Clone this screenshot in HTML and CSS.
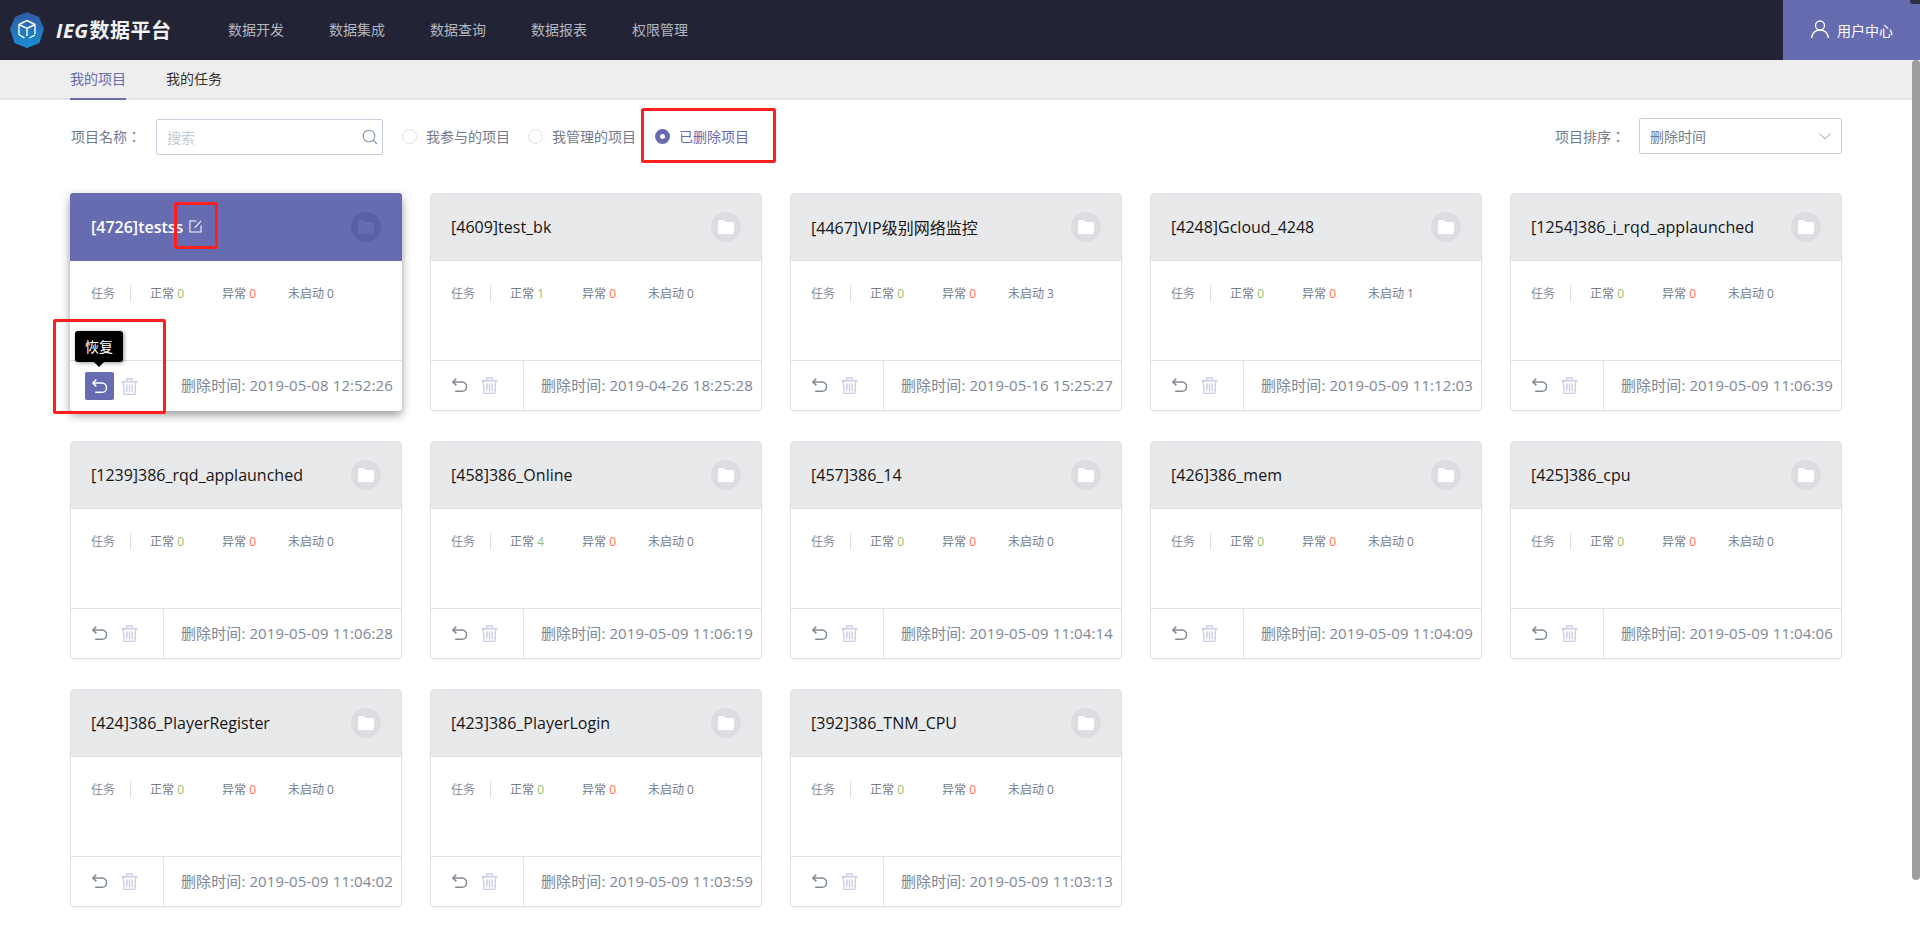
FILE: index.html
```html
<!DOCTYPE html>
<html lang="zh-CN">
<head>
    <meta charset="UTF-8">
    <title>IEG数据平台</title>
    <link rel="stylesheet" href="styles.css">
</head>
<body>
    <svg class="sprite" width="0" height="0">
        <defs>
            <linearGradient id="logo-fill" x1="0" y1="0" x2="0" y2="1">
                <stop offset="0" stop-color="#2f5aa6"/>
                <stop offset="1" stop-color="#1a8fd1"/>
            </linearGradient>
        </defs>
        <symbol id="i-undo" viewBox="0 0 16 16">
            <path d="M5 1.5 1.8 4.7 5 7.9M1.8 4.7h8.4a4.4 4.4 0 0 1 0 8.8H4" fill="none" stroke="currentColor" stroke-width="1.4"/>
        </symbol>
        <symbol id="i-trash" viewBox="0 0 16 16">
            <path d="M.5 3.5h15M5.5 3.300V1h5v2.300M2.200 3.500l.8 12h10l.8-12M5.500 6v7.500M8 6v7.500M10.500 6v7.500" fill="none" stroke="currentColor" stroke-width="1.300"/>
        </symbol>
        <symbol id="i-folder" viewBox="0 0 16 14">
            <path d="M0 1.500A1.500 1.500 0 0 1 1.500 0h4.300l1.700 2h7A1.500 1.500 0 0 1 16 3.500v9a1.500 1.500 0 0 1-1.500 1.500h-13A1.500 1.500 0 0 1 0 12.500z" fill="currentColor"/>
        </symbol>
    </svg>

    <header class="topbar">
        <a class="logo">
            <svg class="logo-mark" viewBox="0 0 34 36">
                <path d="M17 0 29 5 34 17 29.500 31 17 36 4.500 31 0 17 5 5z" fill="url(#logo-fill)"/>
                <path d="M17 8.500 25 12.500V22M17 8.500 9 12.500V22.500L14.500 26M9 12.500 17 16.500 25 12.500M17 16.500V24M19.500 26 25 23" fill="none" stroke="#fff" stroke-width="1.400"/>
            </svg>
            <span class="logo-text"><i>IEG</i>数据平台</span>
        </a>
        <nav class="main-nav">
            <a>数据开发</a>
            <a>数据集成</a>
            <a>数据查询</a>
            <a>数据报表</a>
            <a>权限管理</a>
        </nav>
        <a class="user-center">
            <svg class="user-icon" viewBox="0 0 18 18">
                <circle cx="9" cy="5.500" r="4.500" fill="none" stroke="#fff" stroke-width="1.300"/>
                <path d="M.8 18c0-4.500 3.200-8 8.200-8s8.200 3.500 8.200 8" fill="none" stroke="#fff" stroke-width="1.300"/>
            </svg>
            用户中心
        </a>
    </header>

    <div class="subnav">
        <a class="tab active">我的项目</a>
        <a class="tab">我的任务</a>
    </div>

    <main class="content">
        <section class="filters">
            <span class="filter-label" lang="zh-TW">项目名称：</span>
            <div class="search">
                <span>搜索</span>
                <svg class="search-icon" viewBox="0 0 16 16">
                    <circle cx="7" cy="7" r="5.800" fill="none" stroke="currentColor" stroke-width="1.100"/>
                    <path d="m11.200 11.200 3.800 3.800" stroke="currentColor" stroke-width="1.100"/>
                </svg>
            </div>
            <label class="radio"><i></i>我参与的项目</label>
            <label class="radio"><i></i>我管理的项目</label>
            <label class="radio checked"><i></i>已删除项目</label>
            <span class="filter-label sort-label" lang="zh-TW">项目排序：</span>
            <div class="select">
                <span>删除时间</span>
                <svg class="chevron" viewBox="0 0 12 7">
                    <path d="m.5.500 5.500 5.500 5.500-5.500" fill="none" stroke="currentColor"/>
                </svg>
            </div>
        </section>

        <section class="card-grid">
            <article class="card current">
                <div class="card-head">
                    <h3>[4726]testss</h3>
                    <svg class="edit-icon" viewBox="0 0 14 14">
                        <path d="M8 1H1v12h12V6M6 8.500 13 1" fill="none" stroke="#fff" stroke-width="1.100"/>
                    </svg>
                    <span class="folder"><svg viewBox="0 0 16 14"><use href="#i-folder"/></svg></span>
                </div>
                <div class="stats">
                    <span class="stat-title">任务</span>
                    <span class="stat">正常 <b class="ok">0</b></span>
                    <span class="stat stat-err">异常 <b class="err">0</b></span>
                    <span class="stat">未启动 0</span>
                </div>
                <div class="card-foot">
                    <div class="actions">
                        <button class="act on"><svg viewBox="0 0 16 16"><use href="#i-undo"/></svg></button>
                        <button class="act trash"><svg viewBox="0 0 16 16"><use href="#i-trash"/></svg></button>
                        <span class="tooltip">恢复</span>
                    </div>
                    <span class="del-time">删除时间: 2019-05-08 12:52:26</span>
                </div>
            </article>

            <article class="card">
                <div class="card-head"><h3>[4609]test_bk</h3><span class="folder"><svg viewBox="0 0 16 14"><use href="#i-folder"/></svg></span></div>
                <div class="stats"><span class="stat-title">任务</span><span class="stat">正常 <b class="ok">1</b></span><span class="stat stat-err">异常 <b class="err">0</b></span><span class="stat">未启动 0</span></div>
                <div class="card-foot"><div class="actions"><button class="act"><svg viewBox="0 0 16 16"><use href="#i-undo"/></svg></button><button class="act trash"><svg viewBox="0 0 16 16"><use href="#i-trash"/></svg></button></div><span class="del-time">删除时间: 2019-04-26 18:25:28</span></div>
            </article>

            <article class="card">
                <div class="card-head"><h3>[4467]VIP级别网络监控</h3><span class="folder"><svg viewBox="0 0 16 14"><use href="#i-folder"/></svg></span></div>
                <div class="stats"><span class="stat-title">任务</span><span class="stat">正常 <b class="ok">0</b></span><span class="stat stat-err">异常 <b class="err">0</b></span><span class="stat">未启动 3</span></div>
                <div class="card-foot"><div class="actions"><button class="act"><svg viewBox="0 0 16 16"><use href="#i-undo"/></svg></button><button class="act trash"><svg viewBox="0 0 16 16"><use href="#i-trash"/></svg></button></div><span class="del-time">删除时间: 2019-05-16 15:25:27</span></div>
            </article>

            <article class="card">
                <div class="card-head"><h3>[4248]Gcloud_4248</h3><span class="folder"><svg viewBox="0 0 16 14"><use href="#i-folder"/></svg></span></div>
                <div class="stats"><span class="stat-title">任务</span><span class="stat">正常 <b class="ok">0</b></span><span class="stat stat-err">异常 <b class="err">0</b></span><span class="stat">未启动 1</span></div>
                <div class="card-foot"><div class="actions"><button class="act"><svg viewBox="0 0 16 16"><use href="#i-undo"/></svg></button><button class="act trash"><svg viewBox="0 0 16 16"><use href="#i-trash"/></svg></button></div><span class="del-time">删除时间: 2019-05-09 11:12:03</span></div>
            </article>

            <article class="card">
                <div class="card-head"><h3>[1254]386_i_rqd_applaunched</h3><span class="folder"><svg viewBox="0 0 16 14"><use href="#i-folder"/></svg></span></div>
                <div class="stats"><span class="stat-title">任务</span><span class="stat">正常 <b class="ok">0</b></span><span class="stat stat-err">异常 <b class="err">0</b></span><span class="stat">未启动 0</span></div>
                <div class="card-foot"><div class="actions"><button class="act"><svg viewBox="0 0 16 16"><use href="#i-undo"/></svg></button><button class="act trash"><svg viewBox="0 0 16 16"><use href="#i-trash"/></svg></button></div><span class="del-time">删除时间: 2019-05-09 11:06:39</span></div>
            </article>

            <article class="card">
                <div class="card-head"><h3>[1239]386_rqd_applaunched</h3><span class="folder"><svg viewBox="0 0 16 14"><use href="#i-folder"/></svg></span></div>
                <div class="stats"><span class="stat-title">任务</span><span class="stat">正常 <b class="ok">0</b></span><span class="stat stat-err">异常 <b class="err">0</b></span><span class="stat">未启动 0</span></div>
                <div class="card-foot"><div class="actions"><button class="act"><svg viewBox="0 0 16 16"><use href="#i-undo"/></svg></button><button class="act trash"><svg viewBox="0 0 16 16"><use href="#i-trash"/></svg></button></div><span class="del-time">删除时间: 2019-05-09 11:06:28</span></div>
            </article>

            <article class="card">
                <div class="card-head"><h3>[458]386_Online</h3><span class="folder"><svg viewBox="0 0 16 14"><use href="#i-folder"/></svg></span></div>
                <div class="stats"><span class="stat-title">任务</span><span class="stat">正常 <b class="ok">4</b></span><span class="stat stat-err">异常 <b class="err">0</b></span><span class="stat">未启动 0</span></div>
                <div class="card-foot"><div class="actions"><button class="act"><svg viewBox="0 0 16 16"><use href="#i-undo"/></svg></button><button class="act trash"><svg viewBox="0 0 16 16"><use href="#i-trash"/></svg></button></div><span class="del-time">删除时间: 2019-05-09 11:06:19</span></div>
            </article>

            <article class="card">
                <div class="card-head"><h3>[457]386_14</h3><span class="folder"><svg viewBox="0 0 16 14"><use href="#i-folder"/></svg></span></div>
                <div class="stats"><span class="stat-title">任务</span><span class="stat">正常 <b class="ok">0</b></span><span class="stat stat-err">异常 <b class="err">0</b></span><span class="stat">未启动 0</span></div>
                <div class="card-foot"><div class="actions"><button class="act"><svg viewBox="0 0 16 16"><use href="#i-undo"/></svg></button><button class="act trash"><svg viewBox="0 0 16 16"><use href="#i-trash"/></svg></button></div><span class="del-time">删除时间: 2019-05-09 11:04:14</span></div>
            </article>

            <article class="card">
                <div class="card-head"><h3>[426]386_mem</h3><span class="folder"><svg viewBox="0 0 16 14"><use href="#i-folder"/></svg></span></div>
                <div class="stats"><span class="stat-title">任务</span><span class="stat">正常 <b class="ok">0</b></span><span class="stat stat-err">异常 <b class="err">0</b></span><span class="stat">未启动 0</span></div>
                <div class="card-foot"><div class="actions"><button class="act"><svg viewBox="0 0 16 16"><use href="#i-undo"/></svg></button><button class="act trash"><svg viewBox="0 0 16 16"><use href="#i-trash"/></svg></button></div><span class="del-time">删除时间: 2019-05-09 11:04:09</span></div>
            </article>

            <article class="card">
                <div class="card-head"><h3>[425]386_cpu</h3><span class="folder"><svg viewBox="0 0 16 14"><use href="#i-folder"/></svg></span></div>
                <div class="stats"><span class="stat-title">任务</span><span class="stat">正常 <b class="ok">0</b></span><span class="stat stat-err">异常 <b class="err">0</b></span><span class="stat">未启动 0</span></div>
                <div class="card-foot"><div class="actions"><button class="act"><svg viewBox="0 0 16 16"><use href="#i-undo"/></svg></button><button class="act trash"><svg viewBox="0 0 16 16"><use href="#i-trash"/></svg></button></div><span class="del-time">删除时间: 2019-05-09 11:04:06</span></div>
            </article>

            <article class="card">
                <div class="card-head"><h3>[424]386_PlayerRegister</h3><span class="folder"><svg viewBox="0 0 16 14"><use href="#i-folder"/></svg></span></div>
                <div class="stats"><span class="stat-title">任务</span><span class="stat">正常 <b class="ok">0</b></span><span class="stat stat-err">异常 <b class="err">0</b></span><span class="stat">未启动 0</span></div>
                <div class="card-foot"><div class="actions"><button class="act"><svg viewBox="0 0 16 16"><use href="#i-undo"/></svg></button><button class="act trash"><svg viewBox="0 0 16 16"><use href="#i-trash"/></svg></button></div><span class="del-time">删除时间: 2019-05-09 11:04:02</span></div>
            </article>

            <article class="card">
                <div class="card-head"><h3>[423]386_PlayerLogin</h3><span class="folder"><svg viewBox="0 0 16 14"><use href="#i-folder"/></svg></span></div>
                <div class="stats"><span class="stat-title">任务</span><span class="stat">正常 <b class="ok">0</b></span><span class="stat stat-err">异常 <b class="err">0</b></span><span class="stat">未启动 0</span></div>
                <div class="card-foot"><div class="actions"><button class="act"><svg viewBox="0 0 16 16"><use href="#i-undo"/></svg></button><button class="act trash"><svg viewBox="0 0 16 16"><use href="#i-trash"/></svg></button></div><span class="del-time">删除时间: 2019-05-09 11:03:59</span></div>
            </article>

            <article class="card">
                <div class="card-head"><h3>[392]386_TNM_CPU</h3><span class="folder"><svg viewBox="0 0 16 14"><use href="#i-folder"/></svg></span></div>
                <div class="stats"><span class="stat-title">任务</span><span class="stat">正常 <b class="ok">0</b></span><span class="stat stat-err">异常 <b class="err">0</b></span><span class="stat">未启动 0</span></div>
                <div class="card-foot"><div class="actions"><button class="act"><svg viewBox="0 0 16 16"><use href="#i-undo"/></svg></button><button class="act trash"><svg viewBox="0 0 16 16"><use href="#i-trash"/></svg></button></div><span class="del-time">删除时间: 2019-05-09 11:03:13</span></div>
            </article>
        </section>
    </main>

    <!-- red boxes drawn on top of the screenshot -->
    <div class="mark mark-radio"></div>
    <div class="mark mark-edit"></div>
    <div class="mark mark-restore"></div>

    <div class="scroll-thumb"></div>
    <div class="scroll-top"></div>
</body>
</html>
```

FILE: styles.css
```css
* {
    box-sizing: border-box;
}

html, body {
    height: 100%;
    overflow: hidden;
}

body {
    margin: 0;
    background: #fff;
    font-family: "Open Sans", "Noto Sans CJK SC", sans-serif;
    font-size: 14px;
    color: #737c8b;
    position: relative;
}

.sprite {
    position: absolute;
}

/* top bar */
.topbar {
    height: 60px;
    background: #222436;
    display: flex;
    align-items: center;
}

.logo {
    display: flex;
    align-items: center;
    margin-left: 10px;
    width: 217px;
}

.logo-mark {
    width: 34px;
    height: 36px;
    flex: none;
}

.logo-text {
    margin: -2px 0 0 12px;
    font-family: "Noto Sans CJK SC", sans-serif;
    font-size: 20px;
    font-weight: 700;
    letter-spacing: 0.5px;
    color: #f2f3f5;
    white-space: nowrap;
}

.logo-text i {
    font-family: "Open Sans", sans-serif;
    margin-right: 1px;
}

.main-nav {
    display: flex;
    gap: 45px;
    flex: 1;
    margin: -2px 0 0 1px;
}

.main-nav a {
    color: #b4b6bf;
}

.user-center {
    width: 137px;
    height: 60px;
    background: #676bb0;
    color: #fff;
    display: flex;
    align-items: center;
    padding-left: 28px;
    gap: 8px;
}

.user-icon {
    width: 18px;
    height: 18px;
    margin-top: -2px;
}

/* sub nav */
.subnav {
    height: 40px;
    background: #eeeeee;
    border-bottom: 2px solid #e2e6ec;
    padding-left: 70px;
    display: flex;
    gap: 40px;
}

.tab {
    height: 40px;
    line-height: 37px;
    color: #333;
}

.tab.active {
    color: #676bb0;
    border-bottom: 2px solid #676bb0;
}

/* filter row */
.content {
    padding: 18px 78px 0 70px;
}

.filters {
    display: flex;
    align-items: center;
    height: 36px;
}

.filter-label {
    width: 86px;
    padding-left: 1px;
    font-family: "Open Sans", "Noto Sans CJK TC", sans-serif;
    white-space: nowrap;
    color: #737c8b;
}

.search {
    width: 227px;
    height: 36px;
    border: 1px solid #c6cfdb;
    border-radius: 2px;
    padding: 0 10px;
    margin: 2px 19px 0 0;
    display: flex;
    align-items: center;
    justify-content: space-between;
    color: #c3cad4;
}

.search-icon {
    width: 16px;
    height: 16px;
    color: #8a929e;
    margin-right: -6px;
}

.radio {
    display: flex;
    align-items: center;
    margin-right: 18px;
}

.radio i {
    width: 15px;
    height: 15px;
    border: 1px solid #dde1e7;
    border-radius: 50%;
    margin-right: 9px;
}

.radio.checked {
    color: #676bb0;
    margin-left: 1px;
}

.radio.checked i {
    border: 5px solid #676bb0;
    background: #fff;
}

.sort-label {
    margin-left: auto;
    width: 85px;
}

.select {
    width: 203px;
    height: 36px;
    border: 1px solid #c6cfdb;
    border-radius: 2px;
    padding: 0 10px;
    display: flex;
    align-items: center;
    justify-content: space-between;
}

.chevron {
    width: 12px;
    height: 7px;
    color: #9aa2ae;
}

/* cards */
.card-grid {
    display: grid;
    grid-template-columns: repeat(5, 332px);
    grid-auto-rows: 218px;
    gap: 30px 28px;
    margin-top: 39px;
}

.card {
    border: 1px solid #dfe1e6;
    border-radius: 4px;
    box-shadow: 0 1px 2px rgba(0, 0, 0, 0.06);
    background: #fff;
    display: flex;
    flex-direction: column;
}

.card-head {
    height: 67px;
    flex: none;
    background: #e8e9eb;
    border-bottom: 1px solid #dfe1e6;
    border-radius: 3px 3px 0 0;
    display: flex;
    align-items: center;
    padding: 0 20px;
}

.card-head h3 {
    margin: 0 0 1px;
    font-size: 16px;
    font-weight: 400;
    color: #151515;
}

.folder {
    margin-left: auto;
    width: 30px;
    height: 30px;
    border-radius: 50%;
    background: #dcdde0;
    color: #fff;
    display: flex;
    align-items: center;
    justify-content: center;
}

.folder svg {
    width: 16px;
    height: 14px;
}

.edit-icon {
    width: 13px;
    height: 13px;
    margin: -2px 0 0 6px;
}

.stats {
    height: 99px;
    flex: none;
    padding: 0 0 35px 20px;
    display: flex;
    align-items: center;
    font-size: 12px;
}

.stat-title {
    width: 40px;
    height: 17px;
    line-height: 17px;
    border-right: 1px solid #dfe1e6;
    margin-right: 19px;
    color: #8a929e;
}

.stat {
    width: 72px;
}

.stat-err {
    width: 66px;
}

.stat b {
    font-weight: 400;
}

.ok {
    color: #93bf73;
}

.err {
    color: #ff6a55;
}

.card-foot {
    flex: 1;
    border-top: 1px solid #dfe1e6;
    display: flex;
    align-items: center;
}

.actions {
    width: 93px;
    height: 100%;
    border-right: 1px solid #e4e6ea;
    position: relative;
    display: flex;
    align-items: center;
    padding-left: 14px;
}

.act {
    width: 29px;
    height: 28px;
    padding: 0;
    border: 0;
    border-radius: 2px;
    background: none;
    color: #7f8896;
    display: flex;
    align-items: center;
    justify-content: center;
}

.act svg {
    width: 17px;
    height: 17px;
}

.act.on {
    background: #676bb0;
    color: #fff;
}

.act.trash {
    margin-left: 3px;
    width: 24px;
    color: #c9cde8;
}

.del-time {
    margin: 0 0 3px 17px;
    font-size: 15px;
    letter-spacing: 0.1px;
    white-space: nowrap;
    color: #7d8796;
}

/* selected card has no border, so its inside is 1px wider */
.card.current {
    border: 0;
    box-shadow: 0 4px 10px rgba(0, 0, 0, 0.4);
}

.card.current .card-head {
    height: 68px;
    padding: 0 21px;
    background: #676bb0;
    border-bottom: 0;
}

.card.current h3 {
    color: #fff;
    font-weight: 600;
}

.card.current .folder {
    background: #5b5fa5;
    color: #676bb0;
}

.card.current .stats {
    padding-left: 21px;
}

.card.current .actions {
    width: 94px;
    padding-left: 15px;
}

.tooltip {
    position: absolute;
    left: 5px;
    top: -30px;
    width: 48px;
    height: 31px;
    line-height: 31px;
    text-align: center;
    background: #000;
    color: #fff;
    border-radius: 3px;
    box-shadow: 1px 1px 4px rgba(0, 0, 0, 0.4);
}

.tooltip::after {
    content: "";
    position: absolute;
    left: 19px;
    bottom: -5px;
    border: 5px solid transparent;
    border-bottom: 0;
    border-top-color: #000;
}

/* annotations */
.mark {
    position: absolute;
    border: 3px solid #ff1f1f;
    border-radius: 2px;
}

.mark-radio {
    left: 641px;
    top: 108px;
    width: 135px;
    height: 55px;
}

.mark-edit {
    left: 174px;
    top: 202px;
    width: 44px;
    height: 47px;
}

.mark-restore {
    left: 53px;
    top: 319px;
    width: 113px;
    height: 95px;
}

/* fake page scrollbar */
.scroll-thumb {
    position: absolute;
    right: 0;
    top: 60px;
    width: 8px;
    height: 820px;
    background: #9e9e9e;
    border-radius: 4px;
}

.scroll-top {
    position: absolute;
    right: 0;
    top: 0;
    width: 10px;
    height: 4px;
    background: #2e3044;
    border-radius: 0 0 0 3px;
}
```
